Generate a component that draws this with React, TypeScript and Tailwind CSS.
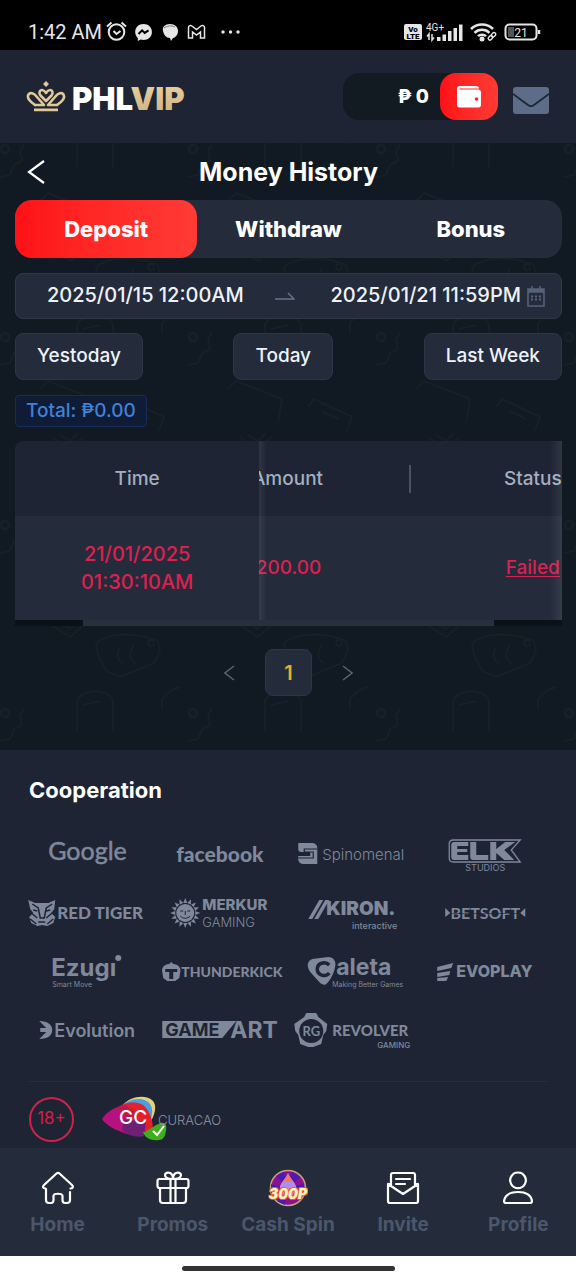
import React, { useLayoutEffect, useRef, useState } from 'react';
import clsx from 'clsx';

const GREY = '#7f899b';
const PANEL = '#1e2433';

const tabs = ['Deposit', 'Withdraw', 'Bonus'];
const ranges = ['Yestoday', 'Today', 'Last Week'];
const rows = [{ date: '21/01/2025', time: '01:30:10AM', amount: '200.00', status: 'Failed' }];

/* ---------- status bar ---------- */

const StatusBar = () => (
  <div className="flex h-[50px] items-center justify-between bg-black pt-[14px] pr-[34px] pl-7 font-[Roboto,sans-serif] text-[#e6e6e6]">
    <div className="flex items-center gap-1">
      <span className="text-[20px] leading-6">1:42 AM</span>
      <svg width="138" height="24" viewBox="0 0 138 24" fill="none" stroke="#e6e6e6" strokeWidth="2">
        <circle cx="10.500" cy="12" r="7.800" />
        <path d="M1 6.500 5.500 2.500M20 6.500 15.500 2.500M7.500 11l3 3 4-3" />
        <path
          d="M37.500 4c-5 0-8.300 3.500-8.300 8 0 2.500 1 4.500 2.600 5.900V21l2.900-1.500c.9.300 1.800.4 2.800.4 5 0 8.400-3.500 8.400-8s-3.400-7.900-8.400-7.900z"
          fill="#e6e6e6"
          stroke="none"
        />
        <path d="m32.500 14 3.600-3.700 2.600 2.600 3.800-2.600" stroke="#000" />
        <path d="M57 11c-1-4 2-7 7-7s8 3 8 7-3 7-5 7l-2 3-1-3c-4 0-6-3-7-7z" fill="#e6e6e6" stroke="none" />
        <path d="M58 8c3-2 7-3 11-1" stroke="#777" strokeWidth="1" />
        <path
          d="M82.500 18V7.500c0-2 2-2.500 3.400-1.500L90.500 9.500 95 6c1.500-1 3.500-.500 3.500 1.500V18h-4V12l-4 3-4-3v6z"
          strokeWidth="1.500"
        />
        <g fill="#e6e6e6" stroke="none">
          <circle cx="117" cy="12" r="1.700" />
          <circle cx="124.500" cy="12" r="1.700" />
          <circle cx="132" cy="12" r="1.700" />
        </g>
      </svg>
    </div>
    <svg width="140" height="24" viewBox="0 0 140 24" fill="none" stroke="#e6e6e6">
      <rect x="2" y="4" width="18" height="16" rx="2" fill="#e6e6e6" stroke="none" />
      <g fontFamily="Roboto, sans-serif" stroke="none">
        <text x="11" y="11.500" fontSize="8" fontWeight="900" fill="#000" textAnchor="middle">Vo</text>
        <text x="11" y="18.500" fontSize="8" fontWeight="900" fill="#000" textAnchor="middle">LTE</text>
        <text x="24" y="10.500" fontSize="10" fill="#e6e6e6">4G+</text>
      </g>
      <path d="M27 20v-6l-2 2.500M30 14v6l2-2.500" strokeWidth="1.500" />
      <g fill="#e6e6e6" stroke="none">
        <path d="M35 17h3.500v4H35zM40.500 14.500H44V21h-3.500zM46 11h3.500v10H46zM51.500 8H55v13h-3.500zM57 4.500h3.500V21H57z" />
        <circle cx="80" cy="19" r="2.500" />
      </g>
      <path d="M69 9c6-6 16-6 22 0M72.500 12.800c4-4 11-4 15 0M76 16.200c2-2 6-2 8 0" strokeWidth="2.600" />
      <g strokeWidth="1.400">
        <rect x="86" y="16.500" width="5" height="3.400" rx="1.700" transform="rotate(-45 88 18)" />
        <rect x="89" y="13.500" width="5" height="3.400" rx="1.700" transform="rotate(-45 91 15)" />
      </g>
      <rect x="103.500" y="4.500" width="31" height="15" rx="4" strokeWidth="2" />
      <path d="M106 7h6v10h-6z" fill="#555" stroke="none" />
      <path d="M137 10v4" strokeWidth="2.500" />
      <text x="119" y="16.500" fontSize="12" fill="#e6e6e6" stroke="none" textAnchor="middle" fontFamily="Roboto, sans-serif">
        21
      </text>
    </svg>
  </div>
);

/* ---------- header ---------- */

const BrandLogo = () => (
  <svg width="170" height="40" viewBox="0 0 170 40">
    <defs>
      <linearGradient id="gold" x1="0" y1="0" x2="0" y2="1">
        <stop offset="0" stopColor="#ecd3a0" />
        <stop offset="1" stopColor="#cbb084" />
      </linearGradient>
    </defs>
    <g transform="translate(1 3)">
      <g fill="none" stroke="#dfc899" strokeWidth="2.600" strokeLinecap="round" strokeLinejoin="round">
        <path d="M9 25C3 21 1 17 2.500 14.500 4 12 8 13 11 17l7 8" />
        <path d="M31 25C37 21 39 17 37.500 14.500 36 12 32 13 29 17l-7 8" />
        <path d="M20 21l-5.500-5.500c-2-2-1-5.500 1.500-5.500 2 0 3 1.500 4 3 1-1.500 2-3 4-3 2.500 0 3.500 3.500 1.500 5.500z" />
        <path d="M9 25h8M23 25h8" />
      </g>
      <path d="M8 28.500h24v2.800H8zM20 1l3 3-3 3-3-3z" fill="#dfc899" />
    </g>
    <text x="47" y="33" fontFamily="Inter, sans-serif" fontSize="31" fontWeight="900" fill="#fff">
      PHL<tspan fill="url(#gold)">VIP</tspan>
    </text>
  </svg>
);

const Header = () => (
  <header className="flex h-[93px] items-center justify-between bg-[#1e2433] pr-[27px] pl-[25px]">
    <a href="#home" aria-label="PHLVIP">
      <BrandLogo />
    </a>
    <div className="flex items-center gap-[15px]">
      <div className="flex h-[47px] w-[155px] items-center justify-end rounded-2xl bg-[#121b22]">
        <span className="mr-[11px] text-[19px] leading-6 font-extrabold text-white">₱ 0</span>
        <button
          type="button"
          aria-label="Wallet"
          className="flex h-[47px] w-[58px] items-center justify-center rounded-2xl bg-linear-to-r from-[#ff0f14] to-[#ff3a34]"
        >
          <svg width="26" height="24" viewBox="0 0 26 24">
            <path d="M4 1h16c2 0 3 1 3 2.500H3.500v1H22c1.800 0 3 1 3 3V20c0 1.500-1 2.500-2.500 2.500h-19C2 22.500 1 21.500 1 20V4c0-2 1-3 3-3z" fill="#fff" />
            <circle cx="20.500" cy="14" r="1.800" fill="#f22" />
          </svg>
        </button>
      </div>
      <button type="button" aria-label="Messages" className="mt-2">
        <svg width="36" height="27" viewBox="0 0 36 27">
          <rect width="36" height="27" rx="3" fill="#5d6c88" />
          <path d="M0 7l15 11c2 1.500 4 1.500 6 0L36 7" fill="none" stroke={PANEL} strokeWidth="1.700" />
        </svg>
      </button>
    </div>
  </header>
);

/* ---------- page ---------- */

const Doodles = () => (
  <svg className="absolute inset-0 h-full w-full" aria-hidden="true">
    <defs>
      <pattern id="doodles" width="188" height="188" patternUnits="userSpaceOnUse" y="100">
        <g fill="none" stroke="#172027" strokeWidth="1.500" strokeLinejoin="round">
          <circle cx="5" cy="94" r="4" strokeWidth="2.500" />
          <path d="M-20 108l6 6 10 0 4 8 10-2 4-10 8-4-2-10 4-6" />
          <path d="M162 80l8-8 10-4M162 80l0 10" />
          <path d="M77 112V82c4-12 30-14 36 0v30M83 86l18-4" />
          <path d="M96 24c14-12 44-10 62-2l2 10-6 12-34 14-14-6-8-16z" />
          <circle cx="151" cy="24" r="3" />
          <path d="M120 28c-4 8-2 16 4 16M134 26c-6 8-4 16 2 18" />
          <path d="M40 146l8-8 46 18-4 24" />
          <path d="M120 164l6-8 38 18-6 16M134 168l16 8" />
          <path d="M52 6l18 12 14-12M60 4l10 6 8-8" />
        </g>
      </pattern>
    </defs>
    <rect width="100%" height="100%" fill="url(#doodles)" />
  </svg>
);

const Tabs = () => {
  const [active, setActive] = useState('Deposit');
  return (
    <div role="tablist" className="flex h-[58px] rounded-[17px] bg-[#242b3b]">
      {tabs.map((tab) => (
        <button
          key={tab}
          type="button"
          role="tab"
          aria-selected={tab === active}
          onClick={() => setActive(tab)}
          className={clsx(
            'flex-1 rounded-[17px] text-[22px] font-extrabold text-white',
            tab === active && 'bg-linear-to-r from-[#ff1016] to-[#ff3a35]',
          )}
        >
          {tab}
        </button>
      ))}
    </div>
  );
};

const DateRange = () => (
  <div className="mt-[15px] flex h-[46px] items-center rounded-lg border border-[#303a4b] bg-[#242b3b] pr-4 text-[20px] font-medium text-[#eef2f8]">
    <input aria-label="Start date" defaultValue="2025/01/15 12:00AM" className="h-full min-w-0 flex-[8] pb-[2px] text-center outline-none" />
    <svg width="20" height="10" viewBox="0 0 20 10" fill="none" stroke="#66728a" strokeWidth="1.500">
      <path d="M0 8h19l-6-6" />
    </svg>
    <input aria-label="End date" defaultValue="2025/01/21 11:59PM" className="h-full min-w-0 flex-[7] pb-[2px] text-right outline-none" />
    <svg className="ml-[6px]" width="18" height="21" viewBox="0 0 18 21" fill="none" stroke="#56627a" strokeWidth="1.600">
      <path d="M1 3h16v17H1zM1 6h16M1 4.500h16M5 0v4M13 0v4" />
      <path d="M4 10.500h10M4 13.500h10" strokeWidth="2" strokeDasharray="2 2" />
    </svg>
  </div>
);

const HistoryTable = () => {
  const scroller = useRef<HTMLDivElement>(null);

  // start halfway so the fixed column overlaps the next one
  useLayoutEffect(() => {
    const el = scroller.current;
    if (el) el.scrollLeft = (el.scrollWidth - el.clientWidth) / 2;
  }, []);

  return (
    <div className="relative mt-[14px] overflow-hidden rounded-tl-lg">
      <div ref={scroller} className="overflow-x-auto [scrollbar-width:none]">
        <table className="w-[134%] table-fixed border-separate border-spacing-0 text-center text-[19px] leading-7 font-medium">
          <thead>
            <tr className="h-[75px] text-[#a3aec0]">
              <th className="sticky left-0 z-10 bg-[#1e2433] font-medium">Time</th>
              <th className="bg-[#1e2433] font-medium">
                <span className="flex h-7 items-center justify-center border-r-2 border-[#4b5363]">Amount</span>
              </th>
              <th className="bg-[#1e2433] font-medium">Status</th>
            </tr>
          </thead>
          <tbody>
            {rows.map((row) => (
              <tr key={row.time} className="h-[110px] text-[#dc2150]">
                <td className="sticky left-0 z-10 bg-[#242b3b] pb-[6px] text-[20px]">
                  {row.date}
                  <br />
                  {row.time}
                </td>
                <td className="bg-[#242b3b] pb-[6px]">{row.amount}</td>
                <td className="bg-[#242b3b] pb-[6px]">
                  <a href="#detail" className="underline underline-offset-2">
                    {row.status}
                  </a>
                </td>
              </tr>
            ))}
          </tbody>
        </table>
      </div>
      <div className="pointer-events-none absolute inset-y-0 left-[44.67%] w-2 bg-linear-to-r from-white/8 to-transparent" />
      <div className="pointer-events-none absolute inset-y-0 right-0 w-3 bg-linear-to-l from-white/8 to-transparent" />
      <div className="absolute inset-x-0 bottom-0 z-20 h-[6px] bg-[#0a1117]">
        <div className="mx-auto h-full w-3/4 bg-[#27303d]" />
      </div>
    </div>
  );
};

const Pager = () => (
  <nav aria-label="Pages" className="mt-[23px] flex items-center justify-center gap-[30px]">
    <button type="button" aria-label="Previous">
      <svg width="11" height="16" viewBox="0 0 11 16" fill="none" stroke="#5a6270" strokeWidth="1.500">
        <path d="M10 1 1 8l9 7" />
      </svg>
    </button>
    <button type="button" className="size-[47px] rounded-lg border border-[#2c3647] bg-[#242b3b] text-[20px] font-semibold text-[#e9ad35]">
      1
    </button>
    <button type="button" aria-label="Next">
      <svg width="11" height="16" viewBox="0 0 11 16" fill="none" stroke="#5a6270" strokeWidth="1.500">
        <path d="m1 1 9 7-9 7" />
      </svg>
    </button>
  </nav>
);

/* ---------- partners ---------- */

const Partner = ({ name, children }: { name: string; children: React.ReactNode }) => (
  <svg className="h-[59px] w-full" viewBox="0 0 132 59" fill={GREY} fontFamily="Inter, sans-serif" role="img" aria-label={name}>
    {children}
  </svg>
);

const rays = Array.from({ length: 16 }, (_, i) => i * 22.5);

const Partners = () => (
  <div className="mt-[18px] grid grid-cols-4 pr-[25px] pl-[21px]">
    <Partner name="Google">
      <text x="27" y="36" fontSize="25" fontFamily="Lato, sans-serif" stroke={GREY} strokeWidth="0.500">Google</text>
    </Partner>
    <Partner name="facebook">
      <text x="22" y="38" fontSize="21" fontWeight="900" fontFamily="Lato, sans-serif">facebook</text>
    </Partner>
    <Partner name="Spinomenal">
      <path d="M12 19h13c4 0 6 2 6 5v16H18c-4 0-6-2-6-5v-3h12v-4H15c-2 0-3-1-3-3z" />
      <path d="M31 25H18v3h9v6H12" stroke={PANEL} strokeWidth="1.200" fill="none" />
      <text x="36" y="36" fontSize="15" fontWeight="300">Spinomenal</text>
    </Partner>
    <Partner name="ELK Studios">
      <path d="M34 16h67l-9 10 9 12H34c-3 0-4-2-4-4V20c0-2 1-4 4-4z" fill="none" stroke={GREY} strokeWidth="1.300" />
      <path d="M35 18h14v4H38v3h10v3H38v3h11v5H35c-2 0-3-1-3-3V21c0-2 1-3 3-3zM51 18h6v13h12v5H54c-2 0-3-1-3-3zM71 18h6v7l9-7h10l-11 8 10 10H85l-8-7v7h-6z" />
      <text x="66" y="47" fontSize="9" textAnchor="middle">STUDIOS</text>
    </Partner>

    <Partner name="Red Tiger">
      <path d="M7 17l7 3h13l7-3-1 9-3 4 4 4-2 6-6 3-5-1-5 1-6-3-2-6 4-4-3-4z" />
      <path d="M11 21l6 4 2 10 4 0 2-10 6-4M10 30l6 5M31 30l-6 5M12 27l4 1M29 27l-4 1M17 39h7M9 36l6 5M32 36l-6 5" stroke={PANEL} strokeWidth="1.500" fill="none" />
      <text x="36" y="36" fontSize="17" fontWeight="900" fontFamily="Lato, sans-serif">RED TIGER</text>
    </Partner>
    <Partner name="Merkur Gaming">
      <circle cx="31" cy="30" r="9" />
      {rays.map((angle) => (
        <path key={angle} d="M29 20l2-5 2 5z" transform={`rotate(${angle} 31 30)`} />
      ))}
      <path d="M26 28h3M33 28h3M31 28v4M26 33c3 3 7 3 10 0" stroke={PANEL} fill="none" />
      <text x="48" y="27" fontSize="15" fontWeight="800">MERKUR</text>
      <text x="48" y="44" fontSize="13" fontWeight="300">GAMING</text>
    </Partner>
    <Partner name="Kiron interactive">
      <path d="M33 17h4L26 36h-4zM39 17h4L32 36h-4z" />
      <text x="40" y="32" fontSize="19" fontWeight="900">KIRON.</text>
      <text x="111" y="46" fontSize="9" fontWeight="500" textAnchor="end">interactive</text>
    </Partner>
    <Partner name="Betsoft">
      <path d="M26 25l5 5-5 4zM106 25l-5 5 5 4z" />
      <text x="66" y="36" fontSize="16" fontWeight="700" textAnchor="middle" fontFamily="Lato, sans-serif">BETSOFT</text>
      <path d="M32 30.500h68" stroke={PANEL} strokeWidth="0.600" />
    </Partner>

    <Partner name="Ezugi">
      <text x="30" y="34" fontSize="24" fontWeight="700">Ezugi</text>
      <path d="M87 12h8v7h-8z" fill={PANEL} />
      <circle cx="97" cy="16" r="3" />
      <text x="31" y="45" fontSize="7">Smart Move</text>
    </Partner>
    <Partner name="Thunderkick">
      <path d="M17 20l2 2c5 0 8 4 7 8l-1 6-4 3h-8l-4-3-1-6c-1-4 2-8 7-8z" />
      <path d="M11 27h12v3h-4v7h-4v-7h-4z" fill={PANEL} />
      <text x="27" y="35" fontSize="14" fontWeight="900" fontFamily="Lato, sans-serif">THUNDERKICK</text>
    </Partner>
    <Partner name="Caleta">
      <path d="M26 17l16-2c5 0 8 4 7 9-1 7-5 14-8 17-2 3-5 2-8-1l-9-10c-4-6-3-11 2-13z" />
      <path d="M43 23c-4-4-12-2-12 4s8 9 12 4" fill="none" stroke={PANEL} strokeWidth="3.500" />
      <text x="50" y="33" fontSize="23" fontWeight="700">aleta</text>
      <text x="46" y="45" fontSize="7">Making Better Games</text>
    </Partner>
    <Partner name="Evoplay">
      <path d="M18 25l16-4-2 5-14 3zM18 31l13-2-1 4-12 2zM18 36l11-1-2 4h-9z" />
      <text x="37" y="35" fontSize="16" fontWeight="800">EVOPLAY</text>
    </Partner>

    <Partner name="Evolution">
      <path d="M18 20c9 0 13 4 13 9s-4 9-13 9l7-7H19v-4h6z" />
      <text x="33" y="36" fontSize="18" fontWeight="600">Evolution</text>
    </Partner>
    <Partner name="GameArt">
      <path d="M8 20h74L68 37H8z" />
      <text x="11" y="35" fontSize="18" fontWeight="700" fill={PANEL}>GAME</text>
      <text x="76" y="37" fontSize="23" fontWeight="700">ART</text>
    </Partner>
    <Partner name="Revolver Gaming">
      <path d="M20 12h10l2 4 9 7-1 7-3 4-2 9-8 3h-5l-8-3-2-9-3-4-1-7 10-7z" />
      <circle cx="25" cy="30" r="12" fill={PANEL} />
      <text x="25" y="35" fontSize="13" fontWeight="700" textAnchor="middle" fontFamily="Lato, sans-serif">RG</text>
      <text x="46" y="35" fontSize="15" fontWeight="900" fontFamily="Lato, sans-serif">REVOLVER</text>
      <text x="124" y="47" fontSize="8" fontWeight="500" textAnchor="end">GAMING</text>
    </Partner>
  </div>
);

const CuracaoSeal = () => (
  <svg width="124" height="46" viewBox="0 0 124 46" role="img" aria-label="GC Curacao">
    <path d="M20 10C28 0 44-2 51 5c4 5 2 13-2 20L32 14z" fill="#e8cf7c" />
    <path d="M18 12c8-10 24-12 30-4 4 6 2 14-2 22L30 16z" fill="#4a9fe0" />
    <path d="M12 14C22 5 38 4 44 12c6 7 8 18 6 26L24 26z" fill="#e3202c" />
    <path d="M0 23C4 16 14 10 24 9l12 17-2 14C20 38 4 30 0 23z" fill="#b5127f" />
    <path d="M14 12c10-4 18 0 22 8l-6 6z" fill="#c21a3c" />
    <path d="M22 24l22 2-2 14c-8 2-16-1-22-6z" fill="#6d2074" />
    <path d="M41 36c6-1 11-7 18-9 5-1 6 3 5 8-1 6-3 9-7 9-8 1-14-2-16-8z" fill="#3fae1b" />
    <path d="M51 35l4 4 7-9" fill="none" stroke="#fff" strokeWidth="2" />
    <text x="17" y="28" fontFamily="Inter, sans-serif" fontSize="19" fontWeight="500" fill="#fff">GC</text>
    <text x="56" y="29" fontFamily="Inter, sans-serif" fontSize="13" fontWeight="300" fill="#8b93a2">CURACAO</text>
  </svg>
);

/* ---------- bottom navigation ---------- */

const CashSpinIcon = () => (
  <svg width="40" height="38" viewBox="0 0 40 38">
    <circle cx="20" cy="19" r="17.500" fill="#8b118f" stroke="#c4a17a" strokeWidth="1.500" />
    <path d="M20 19 8 7l8-4zM20 19l4-16 8 5zM20 19l16-4v9zM20 19 3 15v9zM20 19 9 32l8 4z" fill="#4a1bb0" />
    <path d="M20 4c2 5 6 8 8 13 1 7-3 10-8 10s-9-3-8-10c2-5 6-8 8-13z" fill="#b38be8" />
    <path d="M20 5c1 3 4 5 5 8H15c1-3 4-5 5-8z" fill="#ef7b60" />
    <text
      x="20"
      y="30"
      textAnchor="middle"
      fontFamily="Inter, sans-serif"
      fontSize="14"
      fontStyle="italic"
      fontWeight="900"
      fill="#fff3c4"
      stroke="#ef5a1c"
      strokeWidth="2"
      paintOrder="stroke"
    >
      300P
    </text>
  </svg>
);

const lineIcon = (d: string) => (
  <svg width="36" height="36" viewBox="0 0 36 36" fill="none" stroke="#fff" strokeWidth="2.200" strokeLinecap="round" strokeLinejoin="round">
    <path d={d} />
  </svg>
);

const navItems = [
  {
    label: 'Home',
    icon: lineIcon('M5.500 18.500c-3 0-3-2-1.500-3.500L16.500 3.500c1-.800 2-.800 3 0L32 15c2 2 .500 3.500-1.500 3.500M6 19v11c0 2 1 3 3 3h2c2 0 2.500-1 2.500-3v-4c0-3 9-3 9 0v4c0 2 .500 3 2.500 3h2c2 0 3-1 3-3v-8'),
  },
  {
    label: 'Promos',
    icon: lineIcon('M4.500 9h27c1.500 0 2 .500 2 2v5c0 1-.500 2-2 2h-27c-1.500 0-2-1-2-2v-5c0-1.500.500-2 2-2zM5 18v12c0 2 1 3 3 3h20c2 0 3-1 3-3V18M15.500 9v24M20.500 9v24M18 9c-6 0-8-2-8-4s3-3 5-2 3 3 3 6c0-3 1-5 3-6s5 0 5 2-2 4-8 4z'),
  },
  { label: 'Cash Spin', icon: <CashSpinIcon /> },
  {
    label: 'Invite',
    icon: lineIcon('M6 14H3v17c0 1 .500 2 2 2h26c1.500 0 2-1 2-2V14h-3M3 14l15 10 15-10M6 15V5c0-1.500.500-2 2-2h20c1.500 0 2 .500 2 2v10M11 9h14M11 14h9'),
  },
  {
    label: 'Profile',
    icon: lineIcon('M18 2.500a7.800 7.800 0 1 0 .01 0zM4 31c1-6 6-9 14-9s13 3 14 9c0 1.500-1 2-2 2H6c-1 0-2-.500-2-2z'),
  },
];

const BottomNav = () => (
  <nav aria-label="Main" className="grid h-[108px] grid-cols-5 bg-[#242b3b] pt-[21px]">
    {navItems.map((item) => (
      <a key={item.label} href="#" className="flex flex-col items-center text-[19px] leading-6 font-bold text-[#4b576b]">
        <span className="mb-[6px] flex h-[38px] items-center">{item.icon}</span>
        {item.label}
      </a>
    ))}
  </nav>
);

export default function App() {
  return (
    <div className="flex min-h-screen w-full flex-col bg-[#111a22] font-[Inter,sans-serif]">
      <StatusBar />
      <Header />
      <main className="relative flex-1">
        <Doodles />
        <div className="relative pr-[14px] pb-[54px] pl-[15px]">
          <div className="relative flex h-[57px] items-center justify-center">
            <button type="button" aria-label="Back" className="absolute left-3">
              <svg width="18" height="26" viewBox="0 0 18 26" fill="none" stroke="#fff" strokeWidth="2.200">
                <path d="M17 2 2 13l15 11" />
              </svg>
            </button>
            <h1 className="text-[25px] leading-8 font-bold text-white">Money History</h1>
          </div>
          <Tabs />
          <DateRange />
          <div className="mt-[14px] flex justify-between">
            {ranges.map((range) => (
              <button
                key={range}
                type="button"
                className="h-[47px] rounded-lg border border-[#2c3647] bg-[#242b3b] px-[21px] text-[19px] font-medium text-[#eef2f8]"
              >
                {range}
              </button>
            ))}
          </div>
          <p className="mt-[15px] flex h-8 w-fit items-center rounded-sm border border-[#172c58] bg-[#101b35] px-[10px] text-[19px] font-medium text-[#3f82d6]">
            Total: ₱0.00
          </p>
          <HistoryTable />
          <Pager />
        </div>
      </main>
      <footer className="bg-[#1e2433] pt-[24px] pb-[6px]">
        <h2 className="px-[29px] text-[22px] leading-8 font-bold text-white">Cooperation</h2>
        <Partners />
        <div className="mx-[29px] mt-[21px] flex items-center gap-7 border-t border-[#272f3e] pt-[14px]">
          <span className="flex size-[45px] items-center justify-center rounded-full border-2 border-[#cf2149] text-[17px] text-[#cf2149]">
            18+
          </span>
          <CuracaoSeal />
        </div>
      </footer>
      <BottomNav />
      <div className="flex h-6 items-center justify-center bg-white">
        <div className="h-[5px] w-[213px] rounded-full bg-[#333]" />
      </div>
    </div>
  );
}
